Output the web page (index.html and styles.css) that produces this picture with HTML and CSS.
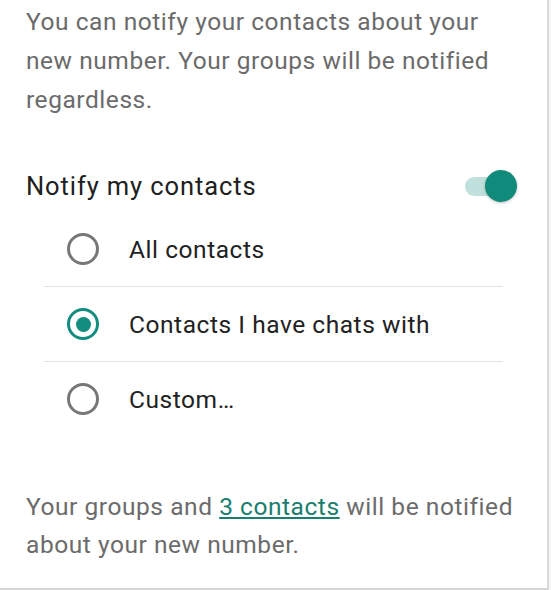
FILE: index.html
```html
<!DOCTYPE html>
<html lang="en">
<head>
<meta charset="utf-8">
<title>Change number</title>
<link rel="stylesheet" href="styles.css">
</head>
<body>
<div class="card">
  <p class="intro">You can notify your contacts about your new number. Your groups will be notified regardless.</p>
  <div class="toggle-row">
    <span class="toggle-label">Notify my contacts</span>
    <span class="switch"><span class="track"></span><span class="thumb"></span></span>
  </div>
  <ul class="options">
    <li class="option">
      <span class="radio"></span>
      <span class="option-label">All contacts</span>
    </li>
    <li class="option">
      <span class="radio checked"></span>
      <span class="option-label">Contacts I have chats with</span>
    </li>
    <li class="option">
      <span class="radio"></span>
      <span class="option-label">Custom…</span>
    </li>
  </ul>
  <p class="summary">Your groups and <a class="link" href="#">3 contacts</a> will be notified about your new number.</p>
</div>
</body>
</html>
```
FILE: styles.css
```css
html, body {
  margin: 0;
  padding: 0;
  background: #f4f4f4;
}
body {
  font-family: Roboto, "Liberation Sans", sans-serif;
  font-size: 24.5px;
  letter-spacing: 0.55px;
}
.card {
  box-sizing: border-box;
  width: 549px;
  height: 590px;
  background: #ffffff;
  border-right: 2px solid #dadada;
  border-bottom: 2px solid #d6d6d6;
  padding: 2px 0 0 26px;
}
.intro {
  margin: 0;
  width: 490px;
  line-height: 39px;
  color: #6b6b6b;
}
.toggle-row {
  display: flex;
  align-items: center;
  justify-content: space-between;
  height: 40px;
  margin-top: 47px;
  padding-right: 30px;
}
.toggle-label {
  font-size: 25.5px;
  letter-spacing: 0.9px;
  line-height: 39px;
  color: #202020;
}
.switch {
  position: relative;
  width: 52px;
  height: 34px;
}
.track {
  position: absolute;
  left: 0;
  top: 8px;
  width: 46px;
  height: 19px;
  border-radius: 10px;
  background: #bfe0dc;
}
.thumb {
  position: absolute;
  right: 0;
  top: 1px;
  width: 32px;
  height: 32px;
  border-radius: 50%;
  background: #0f8a7b;
  box-shadow: 0 1px 3px rgba(0, 0, 0, 0.25);
}
.options {
  list-style: none;
  margin: 6px 0 0 18px;
  padding: 0;
  width: 459px;
}
.option {
  display: flex;
  align-items: center;
  height: 74px;
  border-bottom: 1px solid #e2e2e2;
}
.option:last-child {
  border-bottom: none;
}
.radio {
  box-sizing: border-box;
  width: 32px;
  height: 32px;
  margin-left: 23px;
  margin-right: 30px;
  border: 3px solid #777777;
  border-radius: 50%;
  display: flex;
  align-items: center;
  justify-content: center;
}
.radio.checked {
  border-color: #138d7f;
}
.radio.checked::after {
  content: "";
  width: 15px;
  height: 15px;
  border-radius: 50%;
  background: #138d7f;
}
.option-label {
  line-height: 39px;
  color: #222222;
}
.summary {
  margin: 52px 0 0;
  width: 505px;
  line-height: 38px;
  color: #6b6b6b;
}
.link {
  color: #1a7d6e;
  text-decoration: underline;
  text-decoration-thickness: 2px;
  text-underline-offset: 2px;
}
```
